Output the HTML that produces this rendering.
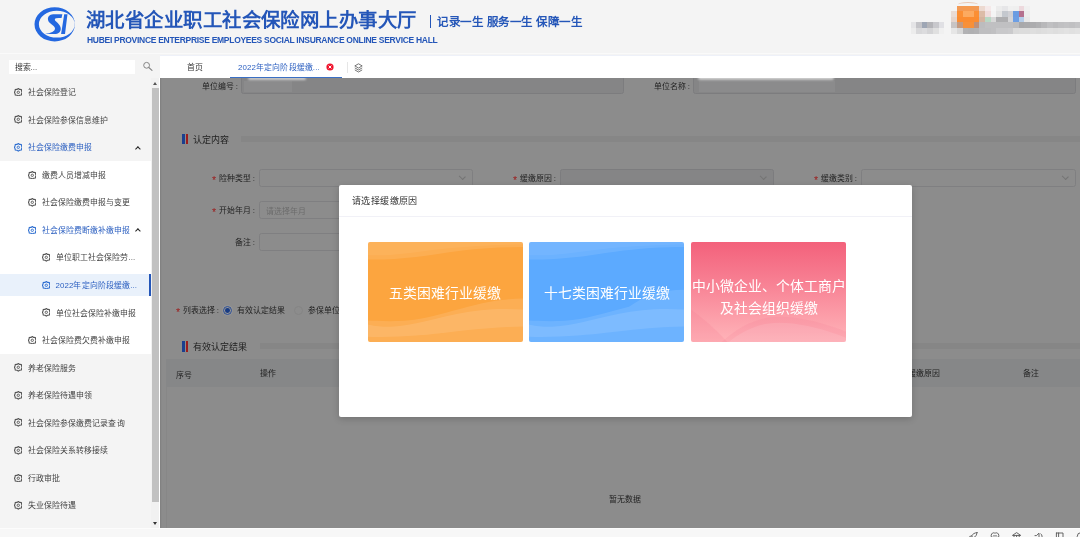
<!DOCTYPE html>
<html lang="zh-CN">
<head>
<meta charset="utf-8">
<title>湖北省企业职工社会保险网上办事大厅</title>
<style>
*{box-sizing:border-box;margin:0;padding:0}
html,body{width:1080px;height:537px;overflow:hidden;background:#f4f4f4;font-family:"Liberation Sans",sans-serif;color:#333}
#app{position:relative;width:1080px;height:537px;overflow:hidden;will-change:transform}
/* header */
#hdr{position:absolute;left:0;top:0;width:1080px;height:54px;background:#f4f4f4;border-bottom:1px solid #fafafa}
#logo{position:absolute;left:33px;top:5px}
#title{position:absolute;left:86px;top:8.4px;font-size:19.4px;font-weight:bold;color:#2456b8;letter-spacing:0.45px;white-space:nowrap;line-height:24px}
#sub{position:absolute;left:87px;top:35px;font-size:8.5px;font-weight:bold;color:#2456b8;white-space:nowrap;line-height:10px;letter-spacing:-0.29px}
#slogan{position:absolute;left:430px;top:14px;letter-spacing:0.5px;font-size:11.5px;font-weight:bold;color:#2456b8;white-space:nowrap;line-height:16px}
#slogan i{display:inline-block;width:1px;height:13px;background:#2456b8;vertical-align:-2px;margin-right:6px}
/* sidebar */
#side{position:absolute;left:0;top:55px;width:160px;height:473px;background:#f4f4f4}
#search{position:absolute;left:9px;top:4.5px;width:126px;height:14.6px;background:#fff;font-size:7.9px;line-height:15.5px;padding-left:5.5px;color:#333}
#mag{position:absolute;left:142px;top:5px}
#menu{position:absolute;left:0;top:23.8px;width:151px}
.mi{position:relative;height:27.56px;line-height:27.56px;letter-spacing:.1px;font-size:7.9px;color:#444;white-space:nowrap}
.mi svg{position:absolute;top:9.1px;width:8.6px;height:8.6px;color:#555;margin-left:.6px}
.mi.blue svg{color:#2f6fd0}
.mi span{position:absolute;top:.4px;margin-left:.5px}
.l1 svg{left:13px}.l1 span{left:27px}
.l2{background:#fff}.l2 svg{left:27px}.l2 span{left:41px}
.l3{background:#fff}.l3 svg{left:41px}.l3 span{left:55px}
.blue{color:#2b5fc0}
.act:before{content:"";position:absolute;left:0;top:1.9px;width:150.7px;height:22.6px;background:#e9f1fb;border-right:2px solid #2456b8;box-sizing:border-box}
.car{position:absolute;left:135.6px;top:12.9px;width:3.8px;height:3.8px;border-left:1.4px solid #222;border-top:1.4px solid #222;transform:rotate(45deg);transform-origin:center}
#sb{position:absolute;left:150.5px;top:23px;width:9.2px;height:450px;background:#f1f1f1;border-right:.7px solid #fff}
#sb b{position:absolute;left:1.6px;top:10px;width:6.9px;height:414px;background:#c1c1c1}
#sb .u{position:absolute;left:2.6px;top:4.2px;border-left:2.4px solid transparent;border-right:2.4px solid transparent;border-bottom:3px solid #555}
#sb .d{position:absolute;left:2.6px;bottom:3.3px;border-left:2.4px solid transparent;border-right:2.4px solid transparent;border-top:3px solid #333}
/* tabs */
#tabs{position:absolute;left:160px;top:55px;width:920px;height:23px;background:#fff;border-top:1px solid #eef1f9}
#tabs span{position:absolute;top:-1px;letter-spacing:.12px;line-height:25px;font-size:7.9px;white-space:nowrap}
#tabs .ul{position:absolute;left:69.5px;top:21px;width:112.5px;height:1.2px;background:#3a6fc4}
#tabs svg{position:absolute}
#tabs .dv{position:absolute;left:187px;top:6px;width:1px;height:11px;background:#e6e6e6}
#user{position:absolute;left:900px;top:0;width:180px;height:54px;overflow:hidden;filter:blur(.5px)}
#user i{position:absolute;display:block}
/* main (dimmed) */
#main{position:absolute;left:160px;top:78px;width:920px;height:450px;background:#8c8c8c;overflow:hidden;box-shadow:inset 1.3px 0 0 #828282}
#foot{position:absolute;left:0;top:528px;width:1080px;height:9px;background:#f7f7f7;border-top:1.5px solid #fcfcfc}

/* dimmed content: coordinates are page coords minus (160,78) */
#main>*,.ip>*{position:absolute;white-space:nowrap}
.lb{font-size:7.9px;line-height:12px;color:#1f1f1f;text-align:right;margin-top:1.2px}
.lb em{font-style:normal;color:#9c1a1a;margin-right:2.5px;font-size:10.5px;position:relative;top:3.3px;line-height:1px}
.ip{height:18.6px;border:1px solid #7f7f81;border-radius:2.5px;background:#8c8c8c;margin-left:-.8px;margin-top:-.3px}
.ip.dis{background:#858586;border-color:#7c7c7e}
.ip s{right:7.5px;top:4.6px;width:4.6px;height:4.6px;border-right:1px solid #747474;border-bottom:1px solid #747474;transform:rotate(45deg) scale(1.1,.9);transform-origin:center}
.ph{font-size:7.9px;line-height:16px;color:#6c6c6c;left:6px;top:2.3px}
.sec{font-size:9px;line-height:12px;color:#222;margin-top:1px}
.bb{width:3.5px;height:10.5px;background:#1b3f8f}
.rb{width:1.7px;height:10.5px;background:#9c1d1d}
.bar{height:6px;background:#868686}
.rd{width:9px;height:9px;border-radius:50%;border:1px solid #858585;background:#8c8c8c}
.rd.on{border-color:#2a4c92;background:#969696;box-shadow:0 0 1.5px rgba(255,255,255,.35)}
.rd.on:after{content:"";position:absolute;left:1.1px;top:1.1px;width:4.8px;height:4.8px;border-radius:50%;background:#173b84}
.th{font-size:7.9px;line-height:12px;color:#1f1f1f;margin-top:1.4px}
/* modal */
#modal{position:absolute;left:339px;top:185px;width:573px;height:232px;background:#fff;border-radius:2px;box-shadow:0 2px 7px rgba(0,0,0,.18)}
#mt{position:absolute;left:13px;top:9px;letter-spacing:.38px;font-size:9px;line-height:14px;color:#333;white-space:nowrap}
#ml{position:absolute;left:0;top:31px;width:573px;height:1px;background:#f1f1f7}
.card{position:absolute;top:56.7px;width:155px;height:100.7px;border-radius:2px;overflow:hidden;color:#fff;font-size:13.85px;text-align:center;white-space:nowrap}
.card svg{position:absolute;left:0;top:0;width:155px;height:100.7px}
.card div{position:absolute;left:-10px;width:175px;line-height:20px}
</style>
</head>
<body>
<div id="app">
<div id="hdr">
<svg id="logo" style="left:30px;top:4px" width="50" height="42" viewBox="30 4 50 42"><g fill="#2468e0"><path fill-rule="evenodd" d="M34.5 24.3a20.2 17.1 0 1 0 40.4 0a20.2 17.1 0 1 0 -40.4 0ZM38.9 24.2a17.9 13.4 0 1 0 35.8 0a17.9 13.4 0 1 0 -35.8 0Z"/><path d="M62.37 14.15L53.15 14.24C49.5 14.4 47.8 16.8 47.95 19.18C48.1 20.8 48.9 22 49.96 22.96C51 23.9 52.5 24.9 53.57 25.89C54.6 26.8 55.1 27.8 54.99 28.82C54.9 30 54 31 52.73 31.76C50.5 33 48 33.6 45.18 33.94L55.66 33.94C57.8 33.6 59.5 32.6 60.27 30.92C60.8 29.8 60.9 28.4 60.52 27.15C60 25.5 58.9 24.1 57.76 22.96C56.7 21.9 55.5 21.2 54.99 20.27C54.6 19.5 55 18.6 56.08 18.35C57.8 18 59.7 18 61.53 17.93Z"/><path d="M64.2 14.2L67.5 14.2L65 33.9L61.1 33.9Z"/></g></svg>
<div id="title">湖北省企业职工社会保险网上办事大厅</div>
<div id="sub">HUBEI PROVINCE ENTERPRISE EMPLOYEES SOCIAL INSURANCE ONLINE SERVICE HALL</div>
<div id="slogan"><i></i>记录一生 服务一生 保障一生</div>
<div id="user">
<i style="left:56.9px;top:5.6px;width:5.9px;height:5.9px;background:#f29a55"></i><i style="left:62.5px;top:5.6px;width:5.9px;height:5.9px;background:#f59a50"></i><i style="left:68.2px;top:5.6px;width:5.9px;height:5.9px;background:#f59a50"></i><i style="left:73.8px;top:5.6px;width:5.9px;height:5.9px;background:#f29a55"></i><i style="left:79.4px;top:5.6px;width:5.9px;height:5.9px;background:#ecd9d0"></i><i style="left:85.0px;top:5.6px;width:5.9px;height:5.9px;background:#f5e9e9"></i><i style="left:90.6px;top:5.6px;width:5.9px;height:5.9px;background:#f6f6f6"></i><i style="left:96.3px;top:5.6px;width:5.9px;height:5.9px;background:#ececec"></i><i style="left:101.9px;top:5.6px;width:5.9px;height:5.9px;background:#e6e6e8"></i><i style="left:107.5px;top:5.6px;width:5.9px;height:5.9px;background:#f0f0f0"></i><i style="left:113.1px;top:5.6px;width:5.9px;height:5.9px;background:#efefef"></i><i style="left:118.7px;top:5.6px;width:5.9px;height:5.9px;background:#edd9dd"></i><i style="left:124.4px;top:5.6px;width:5.9px;height:5.9px;background:#f0f0f0"></i>
<i style="left:51.3px;top:11.2px;width:5.9px;height:5.9px;background:#e9dcd6"></i><i style="left:56.9px;top:11.2px;width:5.9px;height:5.9px;background:#fb8f34"></i><i style="left:62.5px;top:11.2px;width:5.9px;height:5.9px;background:#fcaa60"></i><i style="left:68.2px;top:11.2px;width:5.9px;height:5.9px;background:#fcaa60"></i><i style="left:73.8px;top:11.2px;width:5.9px;height:5.9px;background:#fb8f34"></i><i style="left:79.4px;top:11.2px;width:5.9px;height:5.9px;background:#dcbca8"></i><i style="left:85.0px;top:11.2px;width:5.9px;height:5.9px;background:#f0dcdc"></i><i style="left:90.6px;top:11.2px;width:5.9px;height:5.9px;background:#f4f4f4"></i><i style="left:96.3px;top:11.2px;width:5.9px;height:5.9px;background:#e4e4e4"></i><i style="left:101.9px;top:11.2px;width:5.9px;height:5.9px;background:#c4c8ce"></i><i style="left:107.5px;top:11.2px;width:5.9px;height:5.9px;background:#d0d0d4"></i><i style="left:113.1px;top:11.2px;width:5.9px;height:5.9px;background:#6a9ce2"></i><i style="left:118.7px;top:11.2px;width:5.9px;height:5.9px;background:#b4708e"></i><i style="left:124.4px;top:11.2px;width:5.9px;height:5.9px;background:#ececec"></i>
<i style="left:51.3px;top:16.8px;width:5.9px;height:5.9px;background:#e4d4cc"></i><i style="left:56.9px;top:16.8px;width:5.9px;height:5.9px;background:#fb8c30"></i><i style="left:62.5px;top:16.8px;width:5.9px;height:5.9px;background:#fb8c30"></i><i style="left:68.2px;top:16.8px;width:5.9px;height:5.9px;background:#fb8c30"></i><i style="left:73.8px;top:16.8px;width:5.9px;height:5.9px;background:#fb8c30"></i><i style="left:79.4px;top:16.8px;width:5.9px;height:5.9px;background:#d4b4a0"></i><i style="left:85.0px;top:16.8px;width:5.9px;height:5.9px;background:#b8d8c4"></i><i style="left:90.6px;top:16.8px;width:5.9px;height:5.9px;background:#d8d8d8"></i><i style="left:96.3px;top:16.8px;width:5.9px;height:5.9px;background:#aeaeb0"></i><i style="left:101.9px;top:16.8px;width:5.9px;height:5.9px;background:#aeaeb0"></i><i style="left:107.5px;top:16.8px;width:5.9px;height:5.9px;background:#d4d4d6"></i><i style="left:113.1px;top:16.8px;width:5.9px;height:5.9px;background:#6c9ee4"></i><i style="left:118.7px;top:16.8px;width:5.9px;height:5.9px;background:#b4cce8"></i><i style="left:124.4px;top:16.8px;width:5.9px;height:5.9px;background:#e8e8e8"></i>
<i style="left:51.3px;top:22.4px;width:5.9px;height:5.9px;background:#c8c4c4"></i><i style="left:56.9px;top:22.4px;width:5.9px;height:5.9px;background:#c49a80"></i><i style="left:62.5px;top:22.4px;width:5.9px;height:5.9px;background:#f89038"></i><i style="left:68.2px;top:22.4px;width:5.9px;height:5.9px;background:#f89038"></i><i style="left:73.8px;top:22.4px;width:5.9px;height:5.9px;background:#c09078"></i><i style="left:79.4px;top:22.4px;width:5.9px;height:5.9px;background:#bcbcbe"></i><i style="left:85.0px;top:22.4px;width:5.9px;height:5.9px;background:#c0c0c2"></i><i style="left:90.6px;top:22.4px;width:5.9px;height:5.9px;background:#c0c0c2"></i><i style="left:96.3px;top:22.4px;width:5.9px;height:5.9px;background:#c0c0c2"></i><i style="left:101.9px;top:22.4px;width:5.9px;height:5.9px;background:#c0c0c2"></i><i style="left:107.5px;top:22.4px;width:5.9px;height:5.9px;background:#c0c0c2"></i><i style="left:113.1px;top:22.4px;width:5.9px;height:5.9px;background:#bcbcbe"></i><i style="left:118.7px;top:22.4px;width:5.9px;height:5.9px;background:#a8a8aa"></i><i style="left:124.4px;top:22.4px;width:5.9px;height:5.9px;background:#aaaaac"></i><i style="left:130.0px;top:22.4px;width:5.9px;height:5.9px;background:#acacae"></i><i style="left:135.6px;top:22.4px;width:5.9px;height:5.9px;background:#b0b0b2"></i><i style="left:141.2px;top:22.4px;width:5.9px;height:5.9px;background:#b8b8ba"></i><i style="left:146.8px;top:22.4px;width:5.9px;height:5.9px;background:#c0c0c2"></i><i style="left:152.5px;top:22.4px;width:5.9px;height:5.9px;background:#bcbcbe"></i><i style="left:158.1px;top:22.4px;width:5.9px;height:5.9px;background:#c0c0c2"></i><i style="left:163.7px;top:22.4px;width:5.9px;height:5.9px;background:#c2c2c4"></i><i style="left:169.3px;top:22.4px;width:5.9px;height:5.9px;background:#c0c0c2"></i><i style="left:174.9px;top:22.4px;width:5.9px;height:5.9px;background:#c4c4c6"></i>
<i style="left:51.3px;top:28.0px;width:5.9px;height:5.9px;background:#e6e6e6"></i><i style="left:56.9px;top:28.0px;width:5.9px;height:5.9px;background:#d8d8d8"></i><i style="left:62.5px;top:28.0px;width:5.9px;height:5.9px;background:#b2b2b4"></i><i style="left:68.2px;top:28.0px;width:5.9px;height:5.9px;background:#b0b0b2"></i><i style="left:73.8px;top:28.0px;width:5.9px;height:5.9px;background:#b2b2b4"></i><i style="left:79.4px;top:28.0px;width:5.9px;height:5.9px;background:#bebec0"></i><i style="left:85.0px;top:28.0px;width:5.9px;height:5.9px;background:#bebec0"></i><i style="left:90.6px;top:28.0px;width:5.9px;height:5.9px;background:#c0c0c2"></i><i style="left:96.3px;top:28.0px;width:5.9px;height:5.9px;background:#c8c8ca"></i><i style="left:101.9px;top:28.0px;width:5.9px;height:5.9px;background:#c8c8ca"></i><i style="left:107.5px;top:28.0px;width:5.9px;height:5.9px;background:#cacacc"></i><i style="left:113.1px;top:28.0px;width:5.9px;height:5.9px;background:#dadada"></i><i style="left:118.7px;top:28.0px;width:5.9px;height:5.9px;background:#dcdcdc"></i><i style="left:124.4px;top:28.0px;width:5.9px;height:5.9px;background:#dcdcdc"></i><i style="left:130.0px;top:28.0px;width:5.9px;height:5.9px;background:#dedede"></i><i style="left:135.6px;top:28.0px;width:5.9px;height:5.9px;background:#dcdcdc"></i><i style="left:141.2px;top:28.0px;width:5.9px;height:5.9px;background:#dedede"></i><i style="left:146.8px;top:28.0px;width:5.9px;height:5.9px;background:#e0e0e0"></i><i style="left:152.5px;top:28.0px;width:5.9px;height:5.9px;background:#dedede"></i><i style="left:158.1px;top:28.0px;width:5.9px;height:5.9px;background:#e0e0e0"></i><i style="left:163.7px;top:28.0px;width:5.9px;height:5.9px;background:#e2e2e2"></i><i style="left:169.3px;top:28.0px;width:5.9px;height:5.9px;background:#e0e0e0"></i><i style="left:174.9px;top:28.0px;width:5.9px;height:5.9px;background:#e2e2e2"></i>
<i style="left:10.5px;top:22.4px;width:5.9px;height:5.9px;background:#e4e4e6"></i><i style="left:16.1px;top:22.4px;width:5.9px;height:5.9px;background:#c4c4c8"></i><i style="left:21.7px;top:22.4px;width:5.9px;height:5.9px;background:#9ea6b4"></i><i style="left:27.4px;top:22.4px;width:5.9px;height:5.9px;background:#b4b4b8"></i><i style="left:33.0px;top:22.4px;width:5.9px;height:5.9px;background:#c8c8cc"></i><i style="left:38.6px;top:22.4px;width:5.9px;height:5.9px;background:#e0e0e4"></i><i style="left:10.5px;top:28px;width:5.9px;height:5.9px;background:#ececec"></i><i style="left:16.1px;top:28px;width:5.9px;height:5.9px;background:#d8d8da"></i><i style="left:21.7px;top:28px;width:5.9px;height:5.9px;background:#dcdcde"></i><i style="left:27.4px;top:28px;width:5.9px;height:5.9px;background:#d4d4d6"></i><i style="left:33.0px;top:28px;width:5.9px;height:5.9px;background:#e0e0e0"></i><i style="left:38.6px;top:28px;width:5.9px;height:5.9px;background:#f0f0f0"></i>
<i style="left:58px;top:1.5px;width:20px;height:5px;border-radius:50%;border-top:1.5px solid #e8c8b4"></i>
</div>
</div>
<div id="side">
<div id="search">搜索...</div>
<svg id="mag" width="12" height="13" viewBox="0 0 12 13"><circle cx="4.6" cy="5.3" r="2.9" fill="none" stroke="#858585" stroke-width="1"/><path d="M6.8 7.5L10 10.4" stroke="#858585" stroke-width="1.1" stroke-linecap="round"/></svg>
<div id="menu">
<div class="mi l1"><svg viewBox="0 0 16 16"><path d="M8 .9L10.3 2.6L13.6 2.9L14.1 5.6L15.2 8L14.1 10.4L13.6 13.1L10.3 13.4L8 15.1L5.7 13.4L2.4 13.1L1.9 10.4L.8 8L1.9 5.6L2.4 2.9L5.7 2.6Z" fill="none" stroke="currentColor" stroke-width="2.1" stroke-linejoin="miter"/><circle cx="8" cy="8" r="2.2" fill="none" stroke="currentColor" stroke-width="1.7"/></svg><span>社会保险登记</span></div>
<div class="mi l1"><svg viewBox="0 0 16 16"><path d="M8 .9L10.3 2.6L13.6 2.9L14.1 5.6L15.2 8L14.1 10.4L13.6 13.1L10.3 13.4L8 15.1L5.7 13.4L2.4 13.1L1.9 10.4L.8 8L1.9 5.6L2.4 2.9L5.7 2.6Z" fill="none" stroke="currentColor" stroke-width="2.1" stroke-linejoin="miter"/><circle cx="8" cy="8" r="2.2" fill="none" stroke="currentColor" stroke-width="1.7"/></svg><span>社会保险参保信息维护</span></div>
<div class="mi l1 blue"><svg viewBox="0 0 16 16"><path d="M8 .9L10.3 2.6L13.6 2.9L14.1 5.6L15.2 8L14.1 10.4L13.6 13.1L10.3 13.4L8 15.1L5.7 13.4L2.4 13.1L1.9 10.4L.8 8L1.9 5.6L2.4 2.9L5.7 2.6Z" fill="none" stroke="currentColor" stroke-width="2.1" stroke-linejoin="miter"/><circle cx="8" cy="8" r="2.2" fill="none" stroke="currentColor" stroke-width="1.7"/></svg><span>社会保险缴费申报</span><i class="car"></i></div>
<div class="mi l2"><svg viewBox="0 0 16 16"><path d="M8 .9L10.3 2.6L13.6 2.9L14.1 5.6L15.2 8L14.1 10.4L13.6 13.1L10.3 13.4L8 15.1L5.7 13.4L2.4 13.1L1.9 10.4L.8 8L1.9 5.6L2.4 2.9L5.7 2.6Z" fill="none" stroke="currentColor" stroke-width="2.1" stroke-linejoin="miter"/><circle cx="8" cy="8" r="2.2" fill="none" stroke="currentColor" stroke-width="1.7"/></svg><span>缴费人员增减申报</span></div>
<div class="mi l2"><svg viewBox="0 0 16 16"><path d="M8 .9L10.3 2.6L13.6 2.9L14.1 5.6L15.2 8L14.1 10.4L13.6 13.1L10.3 13.4L8 15.1L5.7 13.4L2.4 13.1L1.9 10.4L.8 8L1.9 5.6L2.4 2.9L5.7 2.6Z" fill="none" stroke="currentColor" stroke-width="2.1" stroke-linejoin="miter"/><circle cx="8" cy="8" r="2.2" fill="none" stroke="currentColor" stroke-width="1.7"/></svg><span>社会保险缴费申报与变更</span></div>
<div class="mi l2 blue"><svg viewBox="0 0 16 16"><path d="M8 .9L10.3 2.6L13.6 2.9L14.1 5.6L15.2 8L14.1 10.4L13.6 13.1L10.3 13.4L8 15.1L5.7 13.4L2.4 13.1L1.9 10.4L.8 8L1.9 5.6L2.4 2.9L5.7 2.6Z" fill="none" stroke="currentColor" stroke-width="2.1" stroke-linejoin="miter"/><circle cx="8" cy="8" r="2.2" fill="none" stroke="currentColor" stroke-width="1.7"/></svg><span>社会保险费断缴补缴申报</span><i class="car"></i></div>
<div class="mi l3"><svg viewBox="0 0 16 16"><path d="M8 .9L10.3 2.6L13.6 2.9L14.1 5.6L15.2 8L14.1 10.4L13.6 13.1L10.3 13.4L8 15.1L5.7 13.4L2.4 13.1L1.9 10.4L.8 8L1.9 5.6L2.4 2.9L5.7 2.6Z" fill="none" stroke="currentColor" stroke-width="2.1" stroke-linejoin="miter"/><circle cx="8" cy="8" r="2.2" fill="none" stroke="currentColor" stroke-width="1.7"/></svg><span>单位职工社会保险劳...</span></div>
<div class="mi l3 blue act"><svg viewBox="0 0 16 16"><path d="M8 .9L10.3 2.6L13.6 2.9L14.1 5.6L15.2 8L14.1 10.4L13.6 13.1L10.3 13.4L8 15.1L5.7 13.4L2.4 13.1L1.9 10.4L.8 8L1.9 5.6L2.4 2.9L5.7 2.6Z" fill="none" stroke="currentColor" stroke-width="2.1" stroke-linejoin="miter"/><circle cx="8" cy="8" r="2.2" fill="none" stroke="currentColor" stroke-width="1.7"/></svg><span>2022年定向阶段缓缴...</span></div>
<div class="mi l3"><svg viewBox="0 0 16 16"><path d="M8 .9L10.3 2.6L13.6 2.9L14.1 5.6L15.2 8L14.1 10.4L13.6 13.1L10.3 13.4L8 15.1L5.7 13.4L2.4 13.1L1.9 10.4L.8 8L1.9 5.6L2.4 2.9L5.7 2.6Z" fill="none" stroke="currentColor" stroke-width="2.1" stroke-linejoin="miter"/><circle cx="8" cy="8" r="2.2" fill="none" stroke="currentColor" stroke-width="1.7"/></svg><span>单位社会保险补缴申报</span></div>
<div class="mi l2"><svg viewBox="0 0 16 16"><path d="M8 .9L10.3 2.6L13.6 2.9L14.1 5.6L15.2 8L14.1 10.4L13.6 13.1L10.3 13.4L8 15.1L5.7 13.4L2.4 13.1L1.9 10.4L.8 8L1.9 5.6L2.4 2.9L5.7 2.6Z" fill="none" stroke="currentColor" stroke-width="2.1" stroke-linejoin="miter"/><circle cx="8" cy="8" r="2.2" fill="none" stroke="currentColor" stroke-width="1.7"/></svg><span>社会保险费欠费补缴申报</span></div>
<div class="mi l1"><svg viewBox="0 0 16 16"><path d="M8 .9L10.3 2.6L13.6 2.9L14.1 5.6L15.2 8L14.1 10.4L13.6 13.1L10.3 13.4L8 15.1L5.7 13.4L2.4 13.1L1.9 10.4L.8 8L1.9 5.6L2.4 2.9L5.7 2.6Z" fill="none" stroke="currentColor" stroke-width="2.1" stroke-linejoin="miter"/><circle cx="8" cy="8" r="2.2" fill="none" stroke="currentColor" stroke-width="1.7"/></svg><span>养老保险服务</span></div>
<div class="mi l1"><svg viewBox="0 0 16 16"><path d="M8 .9L10.3 2.6L13.6 2.9L14.1 5.6L15.2 8L14.1 10.4L13.6 13.1L10.3 13.4L8 15.1L5.7 13.4L2.4 13.1L1.9 10.4L.8 8L1.9 5.6L2.4 2.9L5.7 2.6Z" fill="none" stroke="currentColor" stroke-width="2.1" stroke-linejoin="miter"/><circle cx="8" cy="8" r="2.2" fill="none" stroke="currentColor" stroke-width="1.7"/></svg><span>养老保险待遇申领</span></div>
<div class="mi l1"><svg viewBox="0 0 16 16"><path d="M8 .9L10.3 2.6L13.6 2.9L14.1 5.6L15.2 8L14.1 10.4L13.6 13.1L10.3 13.4L8 15.1L5.7 13.4L2.4 13.1L1.9 10.4L.8 8L1.9 5.6L2.4 2.9L5.7 2.6Z" fill="none" stroke="currentColor" stroke-width="2.1" stroke-linejoin="miter"/><circle cx="8" cy="8" r="2.2" fill="none" stroke="currentColor" stroke-width="1.7"/></svg><span>社会保险参保缴费记录查询</span></div>
<div class="mi l1"><svg viewBox="0 0 16 16"><path d="M8 .9L10.3 2.6L13.6 2.9L14.1 5.6L15.2 8L14.1 10.4L13.6 13.1L10.3 13.4L8 15.1L5.7 13.4L2.4 13.1L1.9 10.4L.8 8L1.9 5.6L2.4 2.9L5.7 2.6Z" fill="none" stroke="currentColor" stroke-width="2.1" stroke-linejoin="miter"/><circle cx="8" cy="8" r="2.2" fill="none" stroke="currentColor" stroke-width="1.7"/></svg><span>社会保险关系转移接续</span></div>
<div class="mi l1"><svg viewBox="0 0 16 16"><path d="M8 .9L10.3 2.6L13.6 2.9L14.1 5.6L15.2 8L14.1 10.4L13.6 13.1L10.3 13.4L8 15.1L5.7 13.4L2.4 13.1L1.9 10.4L.8 8L1.9 5.6L2.4 2.9L5.7 2.6Z" fill="none" stroke="currentColor" stroke-width="2.1" stroke-linejoin="miter"/><circle cx="8" cy="8" r="2.2" fill="none" stroke="currentColor" stroke-width="1.7"/></svg><span>行政审批</span></div>
<div class="mi l1"><svg viewBox="0 0 16 16"><path d="M8 .9L10.3 2.6L13.6 2.9L14.1 5.6L15.2 8L14.1 10.4L13.6 13.1L10.3 13.4L8 15.1L5.7 13.4L2.4 13.1L1.9 10.4L.8 8L1.9 5.6L2.4 2.9L5.7 2.6Z" fill="none" stroke="currentColor" stroke-width="2.1" stroke-linejoin="miter"/><circle cx="8" cy="8" r="2.2" fill="none" stroke="currentColor" stroke-width="1.7"/></svg><span>失业保险待遇</span></div>
</div>
<div id="sb"><i class="u"></i><b></b><i class="d"></i></div>
</div>
<div id="tabs">
<span style="left:27px;color:#333">首页</span>
<span style="left:78px;color:#2b5fc0">2022年定向阶段缓缴...</span>
<i class="ul"></i>
<svg style="left:166px;top:7px" width="8" height="8" viewBox="0 0 8 8"><circle cx="4" cy="4" r="3.6" fill="#f0142d"/><path d="M2.6 2.6L5.4 5.4M5.4 2.6L2.6 5.4" stroke="#fff" stroke-width="1"/></svg>
<i class="dv"></i>
<svg style="left:193.5px;top:7.2px" width="9" height="10" viewBox="0 0 9 10"><path d="M4.5 .8L8.2 2.9L4.5 5L.8 2.9Z" fill="none" stroke="#666" stroke-width=".9" stroke-linejoin="round"/><path d="M.8 4.9L4.5 7L8.2 4.9M.8 6.9L4.5 9L8.2 6.9" fill="none" stroke="#666" stroke-width=".9" stroke-linejoin="round"/></svg>

</div>
<div id="main">
<span class="lb" style="left:0;width:78px;top:1.5px">单位编号 :</span>
<div class="ip dis" style="left:82px;top:-2px;width:383px"></div>
<span class="lb" style="left:400px;width:130px;top:1.5px">单位名称 :</span>
<div class="ip dis" style="left:534px;top:-2px;width:382.5px"></div>

<i style="left:84px;top:3px;width:48px;height:11px;background:rgba(255,255,255,.05)"></i>
<i style="left:88px;top:-1px;width:58px;height:3px;background:rgba(255,255,255,.6);filter:blur(1px);border-radius:2px"></i>
<i style="left:539px;top:3px;width:136px;height:11px;background:rgba(255,255,255,.05)"></i>
<i style="left:538px;top:-2px;width:136px;height:4px;background:rgba(255,255,255,.6);filter:blur(1.2px);border-radius:2px"></i>
<i class="bb" style="left:21.5px;top:55.5px"></i><i class="rb" style="left:26px;top:55.5px"></i>
<span class="sec" style="left:33px;top:54.5px">认定内容</span>
<i class="bar" style="left:81px;top:57.5px;width:839px"></i>

<span class="lb" style="left:0;width:95px;top:94px"><em>*</em>险种类型 :</span>
<div class="ip" style="left:99.5px;top:91px;width:214.5px"><s></s></div>
<span class="lb" style="left:300px;width:96px;top:94px"><em>*</em>缓缴原因 :</span>
<div class="ip dis" style="left:400.5px;top:91px;width:214.5px"><s></s></div>
<span class="lb" style="left:600px;width:97px;top:94px"><em>*</em>缓缴类别 :</span>
<div class="ip" style="left:701.5px;top:91px;width:215px"><s></s></div>

<span class="lb" style="left:0;width:95px;top:126px"><em>*</em>开始年月 :</span>
<div class="ip" style="left:99.5px;top:123px;width:214.5px"><span class="ph">请选择年月</span></div>
<span class="lb" style="left:0;width:95px;top:158px">备注 :</span>
<div class="ip" style="left:99.5px;top:155px;width:214.5px"></div>

<span class="lb" style="left:0;width:59px;top:226px"><em>*</em>列表选择 :</span>
<i class="rd on" style="left:62.9px;top:227.7px"></i>
<span class="th" style="left:77px;top:226px">有效认定结果</span>
<i class="rd" style="left:134px;top:227.5px"></i>
<span class="th" style="left:148px;top:226px">参保单位缓缴</span>

<i class="bb" style="left:21.5px;top:263px"></i><i class="rb" style="left:26px;top:263px"></i>
<span class="sec" style="left:33px;top:262px">有效认定结果</span>
<i class="bar" style="left:99.5px;top:265px;width:821px"></i>

<div style="left:6px;top:281px;width:914px;height:28px;background:#868788"></div>
<div style="left:6px;top:309px;width:914px;height:141px;border-left:1px solid #878787"></div>
<span class="th" style="left:15.5px;top:290.4px">序号</span>
<span class="th" style="left:100px;top:289px">操作</span>
<span class="th" style="left:748px;top:289px">缓缴原因</span>
<span class="th" style="left:862.5px;top:289px">备注</span>
<span class="th" style="left:449px;top:415px">暂无数据</span>
</div>
<div id="modal">
<div id="mt">请选择缓缴原因</div><i id="ml"></i>
<div class="card" style="left:28.6px;background:#fca53f"><svg viewBox="0 0 155 101" preserveAspectRatio="none"><g fill="#fff"><path opacity=".10" d="M0 0H155V5C120 5 95 8 70 12C45 16 20 18 0 17.5Z"/><path opacity=".05" d="M0 0H155V2.5C110 3 80 6 50 10C30 13 10 14 0 13Z"/><path opacity=".11" d="M155 56.7C135 57.2 120 59.7 100 65C77 71 55 78 36 79C20 80 8 79 0 78.8V101H155Z"/><path opacity=".11" d="M155 67.7C130 66 110 68 90 72C65 77 45 84 23 85C12 85.5 5 84 0 82.8V95C30 96 60 93 77 91C110 87 135 85 155 84.8Z"/></g></svg><div style="top:41.5px">五类困难行业缓缴</div></div>
<div class="card" style="left:190px;background:#5caaff"><svg viewBox="0 0 155 101" preserveAspectRatio="none"><g fill="#fff"><path opacity=".10" d="M0 0H155V5C120 5 95 8 70 12C45 16 20 18 0 17.5Z"/><path opacity=".05" d="M0 0H155V2.5C110 3 80 6 50 10C30 13 10 14 0 13Z"/><path opacity=".11" d="M155 48C135 48.5 120 51 100 65C77 71 55 78 36 79C20 80 8 79 0 78.8V101H155Z"/><path opacity=".11" d="M155 67.7C130 66 110 68 90 72C65 77 45 84 23 85C12 85.5 5 84 0 82.8V95C30 96 60 93 77 91C110 87 135 85 155 84.8Z"/></g></svg><div style="top:41.5px">十七类困难行业缓缴</div></div>
<div class="card" style="left:352px;background:linear-gradient(#f3617b,#f77c90 35%,#ffb4b9)"><svg viewBox="0 0 155 101" preserveAspectRatio="none"><path fill="#f2708a" opacity=".16" d="M0 68C12 76 26 89 37 101H0Z"/><path fill="#f2708a" opacity=".13" d="M30 101C48 84 68 75 88 75C112 75 138 83 155 90V101Z"/><path fill="#fff" opacity=".10" d="M37 101C52 88 70 81 88 81C110 81 135 88 155 96V101Z"/></svg><div style="top:34.5px">中小微企业、个体工商户</div><div style="top:56px">及社会组织缓缴</div></div>
</div>
<div id="foot"><svg style="position:absolute;left:960px;top:0" width="120" height="9" viewBox="960 528 120 9"><g fill="none" stroke="#555" stroke-width=".9" stroke-linecap="round" stroke-linejoin="round">
<path d="M977 531.6C974.5 531.8 972.6 533 971.6 535L973.4 536.8C975.6 535.8 976.8 534 977 531.6ZM971.6 535L969.8 535.4M973.4 536.8L973 538"/>
<path d="M991.3 536C990.6 533.5 992 531.8 993.6 531.8C994.4 531.8 994.8 532.3 995 532.3C995.2 532.3 995.6 531.8 996.4 531.8C998 531.8 999.4 533.5 998.7 536M993 535.2C993.6 534.6 994.3 534.6 995 535.2C995.7 534.6 996.4 534.6 997 535.2"/>
<path d="M1012.8 534.2L1016.6 531.6L1020.4 534.2ZM1014 534.6V538M1016.6 534.6V538M1019.2 534.6V538"/>
<path d="M1035 534.6H1036.4L1039 532.2V538M1040.8 532.8C1042.4 534 1042.6 536.2 1041.2 538"/>
<path d="M1056.4 532H1063V538M1056.4 532V538M1058.6 532V538"/>
<circle cx="1081.2" cy="535.6" r="4"/>
</g></svg></div>
</div>
</body>
</html>
